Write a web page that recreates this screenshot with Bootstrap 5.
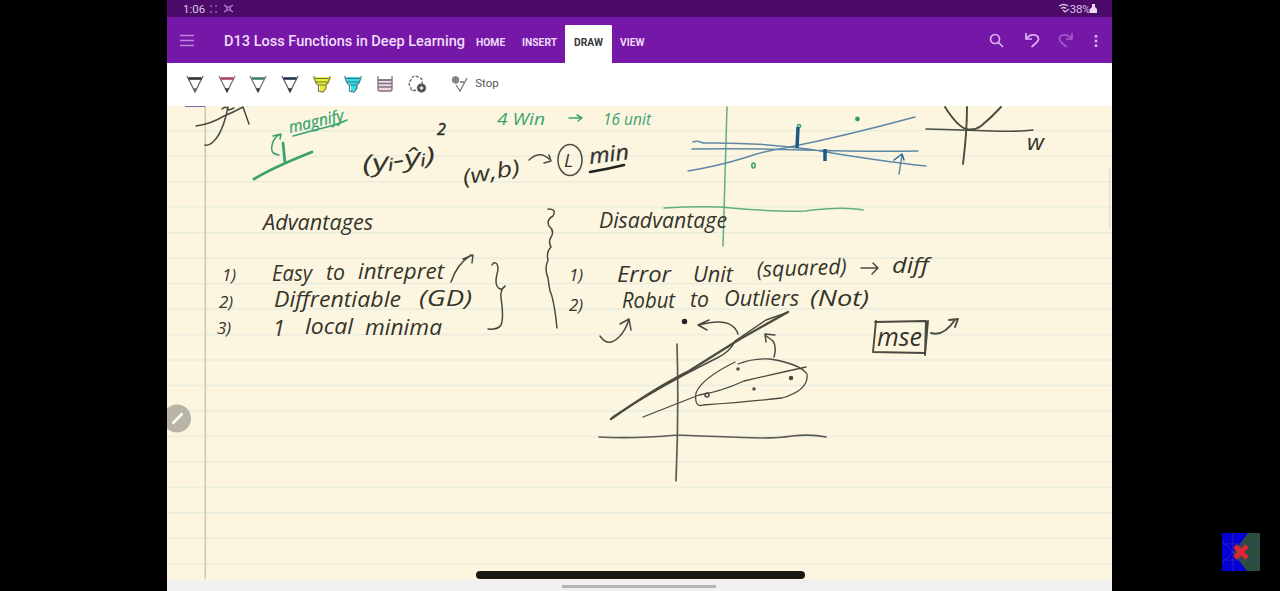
<!DOCTYPE html>
<html lang="en">
<head>
<meta charset="utf-8">
<meta name="viewport" content="width=device-width, initial-scale=1">
<title>D13 Loss Functions in Deep Learning</title>
<link rel="stylesheet" href="https://cdn.jsdelivr.net/npm/bootstrap@5.3.0/dist/css/bootstrap.min.css">
<style>
body{background:#000;font-family:Roboto,sans-serif;height:591px}
.tablet{width:945px;height:591px;margin-left:167px;background:#f0f0f0}
.status{height:17px;background:#4c0b68;color:#dcc4e6;font-size:11.5px;line-height:17px;padding:1px 15px 0 16px}
.appbar{height:46px;background:#7518a7;color:#efd8fa;padding:2px 0 0 13px}
.doc-title{font-size:14.5px;font-weight:500;width:241px;margin-left:30px;white-space:nowrap}
.tabs{font-size:10.3px;font-weight:700;padding-left:11px}
.tabs span{height:38px;line-height:35px;margin-top:6px}
.tab-on{background:#fff;color:#383838;width:47px;text-align:center;border-radius:1px 1px 0 0;margin-left:9px;margin-right:9px}
.tools{height:43px;background:#fff;padding:0 0 1px 18px;gap:11.7px;font-size:11.5px;color:#555}
.paper{height:474px;background:#fcf6e1}
.ink{font-family:"Open Sans",sans-serif;font-style:italic;font-size:21.5px;fill:#35342b}
.pen{fill:none;stroke:#4b4a40;stroke-width:1.5;stroke-linecap:round;stroke-linejoin:round}
.homebar{height:11px;background:#f0f0f0}
.grip{width:154px;height:3px;background:#b5b5b5;margin-left:395px;margin-top:5px}
.gesture{left:476px;top:571px;width:329px;height:8px;background:#1b1813}
.logo{left:1222px;top:533px}
svg{display:block;flex:none}
</style>
</head>
<body class="position-relative overflow-hidden">
<main class="tablet d-flex flex-column">
  <div class="status d-flex justify-content-between">
    <div class="d-flex gap-1"><span>1:06</span>
      <svg width="28" height="15" viewBox="0 0 28 15" fill="none" stroke="#b98bcd" stroke-width="1.2"><path d="M1 5h2M6 5h2M1 11h2M6 11h2M15 4l3 2M15 11l3-2M24 4l-3 2M24 11l-3-2M18 6h3v3h-3z"/></svg></div>
    <div class="d-flex"><svg width="12" height="15" viewBox="0 0 12 15" fill="none" stroke="#dcc4e6" stroke-width="1.3"><path d="M1 5q5-3 9 0M3 7.500q3-2 5 0M5 9l2 2 4-3"/></svg><span style="letter-spacing:-.4px">38%</span><svg width="7" height="15" viewBox="0 0 7 15"><path d="M2 3h3v3l2 2v4H0V8l2-2z" fill="#eadcf0"/></svg></div>
  </div>
  <header class="appbar d-flex align-items-center">
    <svg width="14" height="14" viewBox="0 0 14 14" stroke="#c285df" stroke-width="1.5"><path d="M0 1.500h14M0 6.500h14M0 11.500h14"/></svg>
    <div class="doc-title"><svg width="242" height="22"><text x="0" y="16" textLength="241" lengthAdjust="spacingAndGlyphs" fill="#f1dcfb">D13 Loss Functions in Deep Learning</text></svg></div>
    <nav class="tabs d-flex align-self-start"><span style="width:46px">HOME</span><span style="width:34px">INSERT</span><span class="tab-on">DRAW</span><span style="margin-left:-1px">VIEW</span></nav>
    <div class="ms-auto d-flex align-items-center" style="margin-right:11px">
      <svg width="120" height="24" viewBox="0 0 120 24" fill="none" stroke="#dfb3f3" stroke-width="1.7"><circle cx="14" cy="10" r="4.500"/><path d="M17 13l5 5"/><path d="M45 4v6h6M45.500 10c3-6 12-5 12 0 0 3-4 5-7 8"/><path stroke="#a558c9" d="M91 4v6h-6M90.500 10c-3-6-12-5-12 0 0 3 4 5 7 8"/><path stroke-width="2.6" d="M115 6v2.600M115 10.700v2.600M115 15.400v2.600"/></svg>
    </div>
  </header>
  <div class="tools d-flex align-items-center">
    <svg width="20" height="20" viewBox="0 0 20 20" fill="none" stroke="#666" stroke-width="1.3"><path d="M2 2l2.500 5 5.500 11L15.500 7 18 2"/><path stroke="#303038" stroke-width="2.600" d="M3.500 4.500h13"/><path d="M9 15h2l-1 2z" fill="#222"/></svg>
    <svg width="20" height="20" viewBox="0 0 20 20" fill="none" stroke="#777" stroke-width="1.3"><path d="M2 2l2.500 5 5.500 11L15.500 7 18 2"/><path stroke="#a94661" stroke-width="2.600" d="M3.500 4.500h13"/><path d="M9 15h2l-1 2z" fill="#222" stroke="#333"/></svg>
    <svg width="20" height="20" viewBox="0 0 20 20" fill="none" stroke="#777" stroke-width="1.3"><path d="M2 2l2.500 5 5.500 11L15.500 7 18 2"/><path stroke="#438270" stroke-width="2.600" d="M3.500 4.500h13"/><path d="M9 15h2l-1 2z" fill="#222" stroke="#333"/></svg>
    <svg width="20" height="20" viewBox="0 0 20 20" fill="none" stroke="#666" stroke-width="1.3"><path d="M2 2l2.500 5 5.500 11L15.500 7 18 2"/><path stroke="#24374e" stroke-width="2.600" d="M3.500 4.500h13"/><path d="M9 15h2l-1 2z" fill="#222" stroke="#333"/></svg>
    <svg width="20" height="20" viewBox="0 0 20 20" fill="none" stroke="#777b35" stroke-width="1.2"><path fill="#e4ed38" stroke="none" d="M3 3h14v4l-3 4v4l-6 3v-7L4 8z"/><path d="M2 2v2l2 5 2 2h8l2-2 2-5V2M3 4.500h14M4 8h12M6.500 11v6l4.500 1 3-4v-3"/></svg>
    <svg width="20" height="20" viewBox="0 0 20 20" fill="none" stroke="#397f85" stroke-width="1.2"><path fill="#35dbe4" stroke="none" d="M3 3h14v4l-3 4v4l-6 3v-7L4 8z"/><path d="M2 2v2l2 5 2 2h8l2-2 2-5V2M3 4.500h14M4 8h12M6.500 11v6l4.500 1 3-4v-3"/></svg>
    <svg width="20" height="20" viewBox="0 0 20 20" fill="none" stroke="#82717c" stroke-width="1.3"><path fill="#ead8e4" d="M3 6h14v9q0 2-2 2H5q-2 0-2-2z"/><path d="M3 2v4h14V2M3 9.500h14M3 13h14"/></svg>
    <svg width="22" height="20" viewBox="0 0 22 20" fill="none" stroke="#666" stroke-width="1.4"><path stroke-dasharray="3 1.500" d="M9 16Q3 18 4 13 0 9 4 6 6 0 11 3q5 1 4 6"/><circle cx="14.500" cy="14" r="4" fill="#444"/><path stroke="#eee" d="M12.500 14h4M14.500 12v4"/></svg>
    <svg style="margin-left:9px" width="20" height="20" viewBox="0 0 20 20" fill="none" stroke="#777" stroke-width="1.300"><circle cx="5.500" cy="6" r="3" fill="#aaa"/><path d="M5.500 4v4M3.500 6h4M6 11l4 6 7-13M10 8h4"/></svg>
    <span style="margin-left:-6px">Stop</span>
  </div>
  <section class="paper">
    <svg width="945" height="474" viewBox="167 106 945 474">
      <defs><pattern id="rules" x="167" y="104.500" width="945" height="25.470" patternUnits="userSpaceOnUse"><path d="M0 .8h945" stroke="#e8ecdd" stroke-width="1.500"/></pattern></defs>
      <rect x="167" y="110" width="945" height="470" fill="url(#rules)"/>
      <path d="M205.300 106v473" stroke="#d9c1b2" stroke-width="1.500"/>
      <path d="M185 106.300h20" stroke="#8a68b8" stroke-width="1.500"/>
      <path d="M1109.500 168v62" stroke="#e4e0d4" stroke-width="1.500"/>
      <circle cx="177" cy="418.500" r="14" fill="#b8b4a8"/><path d="M172.500 423.500l10-10" stroke="#fffdf0" stroke-width="2.500"/>
      <g class="pen">
        <path d="M196 126q15-2 28-10 10-4 19-9l6 17M228 107q-5 25-14 34-5 5-9 4M222 109q4-4 7 1l5-2"/>
        <path d="M548 209q9 0 5 7-7 4-4 10 6 5 2 11-3 5 0 10-5 5-3 13-4 9 0 18 1 8 2 13 4 8 7 37"/>
        <path d="M492 265q2-4 5-1 2 4 0 10-3 12 3 15 3 0 5-3M505 286q-5 4-4 12 3 20 0 27-3 5-13 4M451 282q6-18 20-27M463 259l10-4-1 8"/>
        <path d="M529 160q11-10 20-1M544 163l7-2-2-6"/>
        <ellipse cx="570" cy="160" rx="12" ry="15.500"/>
        <path stroke-width="2.600" stroke="#222" d="M590 172q18-3 34-7"/>
        <path d="M600 336q8 12 19 1 7-7 10-18M620 324l9-5 2 11M738 334q-6-18-39-9M709 320l-11 5 9 5M774 357q3-10-1-16l-8-6M766 342l-1-8 10 1"/>
        <circle cx="684.500" cy="321.500" r="2" fill="#222" stroke="#222"/>
        <path stroke-width="1.700" stroke="#5c5b52" d="M677 344q2 65-1 137M599 437q35 2 78-2 50 2 85 3 18 0 30-2 20-2 34 1"/>
        <path stroke-width="2.300" d="M611 419Q655 388 689 371L740 339 788 312"/>
        <path d="M613 417Q660 386 717 358 730 352 735 341L766 320 786 313"/>
        <path stroke-width="1.300" d="M643 417l56-22q21-3 45-14 30-7 62-14M735 362q-34 17-39 31-2 15 7 12 45-3 79-7 27-8 25-24-7-10-37-15-17-1-32 5"/>
        <circle cx="707" cy="395" r="2"/><circle cx="738" cy="369" r="1"/><circle cx="754" cy="389" r="1"/><circle cx="791" cy="378" r="1.500" fill="#444"/>
        <path stroke-width="1.900" d="M875 322l51-1-1 32-52-1 3-31M928 321l-3 34M931 333q12 4 24-13M949 320l9-1-3 8"/>
        <path d="M861 268h17l-5-5M878 268l-6 6M926 129q40 1 65 2 25 1 42-1"/>
        <path stroke-width="1.900" d="M945 107q12 19 21 22 8 2 15-3 10-8 20-19M967 107q0 25-4 57"/>
      </g>
      <g class="pen" style="stroke:#3da16c">
        <path d="M293 136l22-6q22-5 32-10M279 155q-9-1-7-9 1-9 9-12M273 136l8-2-1 5M569 118h13l-5-3M582 118l-4 3"/>
        <path stroke-width="2.700" d="M254 179q20-12 58-27M285 163l-2-20"/>
        <path stroke="#63ad83" d="M727 107q-3 105-4 139M664 208q30-2 56-1 55 5 85 4 38-5 58-1"/>
        <ellipse cx="753.500" cy="165.500" rx="1.700" ry="2.500"/><circle cx="857.500" cy="119" r="1.700" fill="#278d59"/><circle cx="799" cy="126" r="1.600"/>
      </g>
      <g class="pen" style="stroke:#5e88a5">
        <path d="M688 171q30-5 56-13 20-7 41-10 60-12 130-31M692 149q55-1 110 1 70 2 116 1M693 142q5-2 10 1 50-1 105 6 70 12 118 17M899 174l3-19"/>
        <path stroke="#26668c" d="M894 160l8-6 2 6"/><path stroke="#1c5987" stroke-width="3.500" stroke-linecap="butt" d="M798 127l-1 21M825 149v12"/>
      </g>
      <g class="ink">
        <g fill="#3aa46f" style="font-size:16px"><text transform="translate(290 133) rotate(-13)" textLength="56" lengthAdjust="spacingAndGlyphs" stroke="#3aa46f" stroke-width=".3">magnify</text>
        <text x="497" y="125" textLength="48" lengthAdjust="spacingAndGlyphs">4 Win</text><text x="603" y="125" textLength="48" lengthAdjust="spacingAndGlyphs">16 unit</text></g>
        <text transform="translate(363 173) rotate(-8)" textLength="74" lengthAdjust="spacingAndGlyphs" style="font-size:24px">(yᵢ-ŷᵢ)</text><text x="437" y="135" style="font-size:16px" stroke="#333" stroke-width=".6">2</text>
        <text transform="translate(464 185) rotate(-11)" textLength="58" lengthAdjust="spacingAndGlyphs">(w,b)</text>
        <text x="564" y="167" style="font-size:19px">L</text><text transform="translate(590 164) rotate(-7)" textLength="40" lengthAdjust="spacingAndGlyphs" stroke="#333" stroke-width=".3">min</text>
        <text x="263" y="230" textLength="110" lengthAdjust="spacingAndGlyphs">Advantages</text>
        <text x="599" y="228" textLength="128" lengthAdjust="spacingAndGlyphs">Disadvantage</text>
        <g style="font-size:17px"><text x="222" y="281">1)</text><text x="219" y="308">2)</text><text x="217" y="334">3)</text><text x="569" y="281">1)</text><text x="569" y="311">2)</text></g>
        <text x="272" y="281" textLength="40" lengthAdjust="spacingAndGlyphs">Easy</text><text x="326" y="280" textLength="19" lengthAdjust="spacingAndGlyphs">to</text><text x="358" y="279" textLength="86" lengthAdjust="spacingAndGlyphs">intrepret</text>
        <text x="274" y="307" textLength="127" lengthAdjust="spacingAndGlyphs">Diffrentiable</text><text x="419" y="306" textLength="53" lengthAdjust="spacingAndGlyphs">(GD)</text>
        <text x="273" y="336">1</text><text x="305" y="334" textLength="48" lengthAdjust="spacingAndGlyphs">local</text><text x="365" y="335" textLength="77" lengthAdjust="spacingAndGlyphs">minima</text>
        <text x="617" y="282" textLength="54" lengthAdjust="spacingAndGlyphs">Error</text><text x="693" y="282" textLength="40" lengthAdjust="spacingAndGlyphs">Unit</text><text transform="translate(757 277) rotate(-2)" textLength="90" lengthAdjust="spacingAndGlyphs">(squared)</text><text x="892" y="273" textLength="37" lengthAdjust="spacingAndGlyphs">diff</text>
        <text x="622" y="308" textLength="53" lengthAdjust="spacingAndGlyphs">Robut</text><text x="690" y="307" textLength="19" lengthAdjust="spacingAndGlyphs">to</text><text x="724" y="306" textLength="75" lengthAdjust="spacingAndGlyphs">Outliers</text><text x="810" y="306" textLength="59" lengthAdjust="spacingAndGlyphs">(Not)</text>
        <text x="877" y="346" textLength="45" lengthAdjust="spacingAndGlyphs" style="font-size:25px">mse</text><text x="1027" y="150" textLength="17" lengthAdjust="spacingAndGlyphs">w</text>
      </g>
    </svg>
  </section>
  <footer class="homebar d-flex"><div class="grip"></div></footer>
</main>
<div class="gesture position-absolute rounded-pill"></div>
<svg class="logo position-absolute" width="38" height="38" viewBox="0 0 38 38"><path fill="#0500d5" d="M0 0h38v38H0z"/><path fill="#2c4c3f" d="M26 0h12v38H25L11 20z"/><path d="M0 11h38M0 27h38M11 0v38M0 8l22 22M0 30L22 8" stroke="#4952a5" stroke-width=".6" opacity=".7"/><path d="M13 13l12 12M25 13L13 25" stroke="#df2634" stroke-width="5"/></svg>
<script src="https://cdn.jsdelivr.net/npm/bootstrap@5.3.0/dist/js/bootstrap.bundle.min.js"></script>
</body>
</html>
